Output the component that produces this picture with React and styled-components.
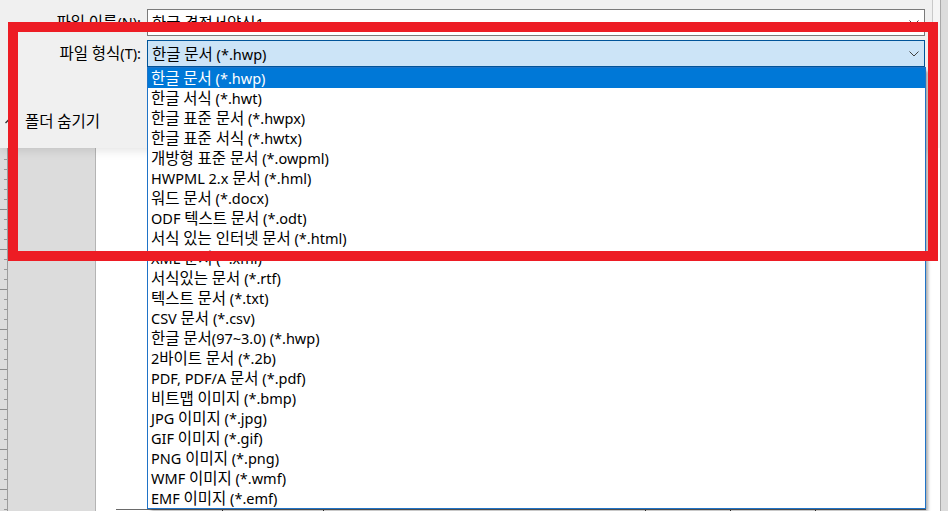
import React from "react";
import styled, { createGlobalStyle } from "styled-components";

const Global = createGlobalStyle`
  html, body { margin: 0; padding: 0; background: #dcdcdc; }
  * { box-sizing: border-box; }
`;

const Screen = styled.div`
  position: relative;
  width: 948px;
  height: 511px;
  overflow: hidden;
  display: grid;
  grid-template-rows: 148px 1fr;
  background: #dcdcdc;
  font-family: "Noto Sans", "Noto Sans CJK KR", sans-serif;
  font-size: 14.5px;
  color: #000;
`;

// hangul runs are drawn a touch larger, as Malgun Gothic does
const Hangul = styled.span`
  font-family: "Noto Sans CJK KR", sans-serif;
  font-size: 15.5px;
  line-height: 1;
`;

const Txt = ({ children }) => (
  <span>
    {children.split(/([가-힣]+)/).map((part, i) =>
      /[가-힣]/.test(part) ? <Hangul key={i}>{part}</Hangul> : part
    )}
  </span>
);

const TopBand = styled.div`
  display: flex;
  position: relative;
  z-index: 2;
`;

const Dialog = styled.div`
  width: 933px;
  background: #f0f0f0;
  border-right: 1px solid #c9c9c9;
  display: flex;
  flex-direction: column;
  box-shadow: 0 2px 10px rgba(0, 0, 0, 0.12);
`;

const SideStrip = styled.div`
  width: 8px;
  background: #f5f5f5;
  border-right: 1px solid #a9a9a9;
`;

const FormGrid = styled.div`
  display: grid;
  grid-template-columns: 141px 778px;
  grid-auto-rows: 27px;
  column-gap: 6px;
  row-gap: 4px;
  padding-top: 9px;
`;

const Label = styled.div`
  text-align: right;
  line-height: 27px;
  white-space: nowrap;
`;

const Field = styled.div`
  position: relative;
  height: 27px;
  border: 1px solid ${(p) => (p.$active ? "#005499" : "#7a7a7a")};
  background: ${(p) => (p.$active ? "#cce4f7" : "#fff")};
  display: flex;
  align-items: center;
  justify-content: space-between;
  padding: 0 5px 0 4px;
  white-space: nowrap;
`;

const Chevron = () => (
  <svg width="10" height="6" viewBox="0 0 10 6">
    <polyline points="0.5,0.5 5,5 9.5,0.5" fill="none" stroke="#404040" strokeWidth="1" />
  </svg>
);

const List = styled.div`
  position: absolute;
  left: -1px;
  top: calc(100% + 1px);
  width: 779px;
  background: #fff;
  border: 1px solid #1f73c7;
  box-shadow: 3px 3px 3px -1px rgba(0, 0, 0, 0.35);
  z-index: 5;
`;

const Item = styled.div`
  height: 20px;
  line-height: 20px;
  padding-left: 3px;
  white-space: nowrap;
  background: ${(p) => (p.$selected ? "#0078d7" : "transparent")};
  color: ${(p) => (p.$selected ? "#fff" : "#000")};
`;

const Footer = styled.div`
  margin-top: auto;
  height: 50px;
  display: flex;
  align-items: center;
  gap: 11px;
  padding: 0 0 4px 5px;
`;

const Editor = styled.div`
  display: flex;
`;

const Gutter = styled.div`
  width: 96px;
  border-right: 1px solid #b4b4b4;
  background: #dcdcdc;
  display: flex;
`;

const Ruler = styled.div`
  width: 8px;
  border-right: 1px solid #9c9c9c;
  background:
    repeating-linear-gradient(to bottom, transparent 0 39px, #8c8c8c 39px 40px) right 0 top 22px / 7px 100% no-repeat,
    repeating-linear-gradient(to bottom, transparent 0 9px, #9a9a9a 9px 10px) right 0 top 2px / 3px 100% no-repeat;
`;

const Page = styled.div`
  width: 845px;
  background: #fff;
  border-right: 1px solid #a9a9a9;
  padding-top: 361px;
`;

const TableRow = styled.div`
  display: grid;
  grid-template-columns: 106px 101px 322px 85px 85px 1fr;
  margin: 0 14px 0 20px;
  height: 4px;
  border-top: 1px solid #6a6a6a;
`;

const Cell = styled.div`
  border-left: 1px solid #333;
  &:first-child { border-left-color: transparent; }
`;

const RedFrame = styled.div`
  position: absolute;
  left: 8px;
  top: 22px;
  width: 930px;
  height: 239px;
  border: 10px solid #ed1c24;
  z-index: 10;
  pointer-events: none;
`;

const types = [
  "한글 문서 (*.hwp)",
  "한글 서식 (*.hwt)",
  "한글 표준 문서 (*.hwpx)",
  "한글 표준 서식 (*.hwtx)",
  "개방형 표준 문서 (*.owpml)",
  "HWPML 2.x 문서 (*.hml)",
  "워드 문서 (*.docx)",
  "ODF 텍스트 문서 (*.odt)",
  "서식 있는 인터넷 문서 (*.html)",
  "XML 문서 (*.xml)",
  "서식있는 문서 (*.rtf)",
  "텍스트 문서 (*.txt)",
  "CSV 문서 (*.csv)",
  "한글 문서(97~3.0) (*.hwp)",
  "2바이트 문서 (*.2b)",
  "PDF, PDF/A 문서 (*.pdf)",
  "비트맵 이미지 (*.bmp)",
  "JPG 이미지 (*.jpg)",
  "GIF 이미지 (*.gif)",
  "PNG 이미지 (*.png)",
  "WMF 이미지 (*.wmf)",
  "EMF 이미지 (*.emf)",
];

export default function App() {
  return (
    <>
      <Global />
      <Screen>
        <TopBand>
          <Dialog>
            <FormGrid>
              <Label><Txt>파일 이름(N):</Txt></Label>
              <Field>
                <Txt>한글 결정서양식1</Txt>
                <Chevron />
              </Field>
              <Label><Txt>파일 형식(T):</Txt></Label>
              <Field $active>
                <Txt>{types[0]}</Txt>
                <Chevron />
                <List>
                  {types.map((t, i) => (
                    <Item key={t} $selected={i === 0}><Txt>{t}</Txt></Item>
                  ))}
                </List>
              </Field>
            </FormGrid>
            <Footer>
              <svg width="9" height="6" viewBox="0 0 9 6">
                <polyline points="0.5,5 4.5,1 8.5,5" fill="none" stroke="#333" strokeWidth="1.4" />
              </svg>
              <Txt>폴더 숨기기</Txt>
            </Footer>
          </Dialog>
          <SideStrip />
        </TopBand>
        <Editor>
          <Gutter>
            <Ruler />
          </Gutter>
          <Page>
            <TableRow>
              <Cell /><Cell /><Cell /><Cell /><Cell /><Cell />
            </TableRow>
          </Page>
        </Editor>
        <RedFrame />
      </Screen>
    </>
  );
}
